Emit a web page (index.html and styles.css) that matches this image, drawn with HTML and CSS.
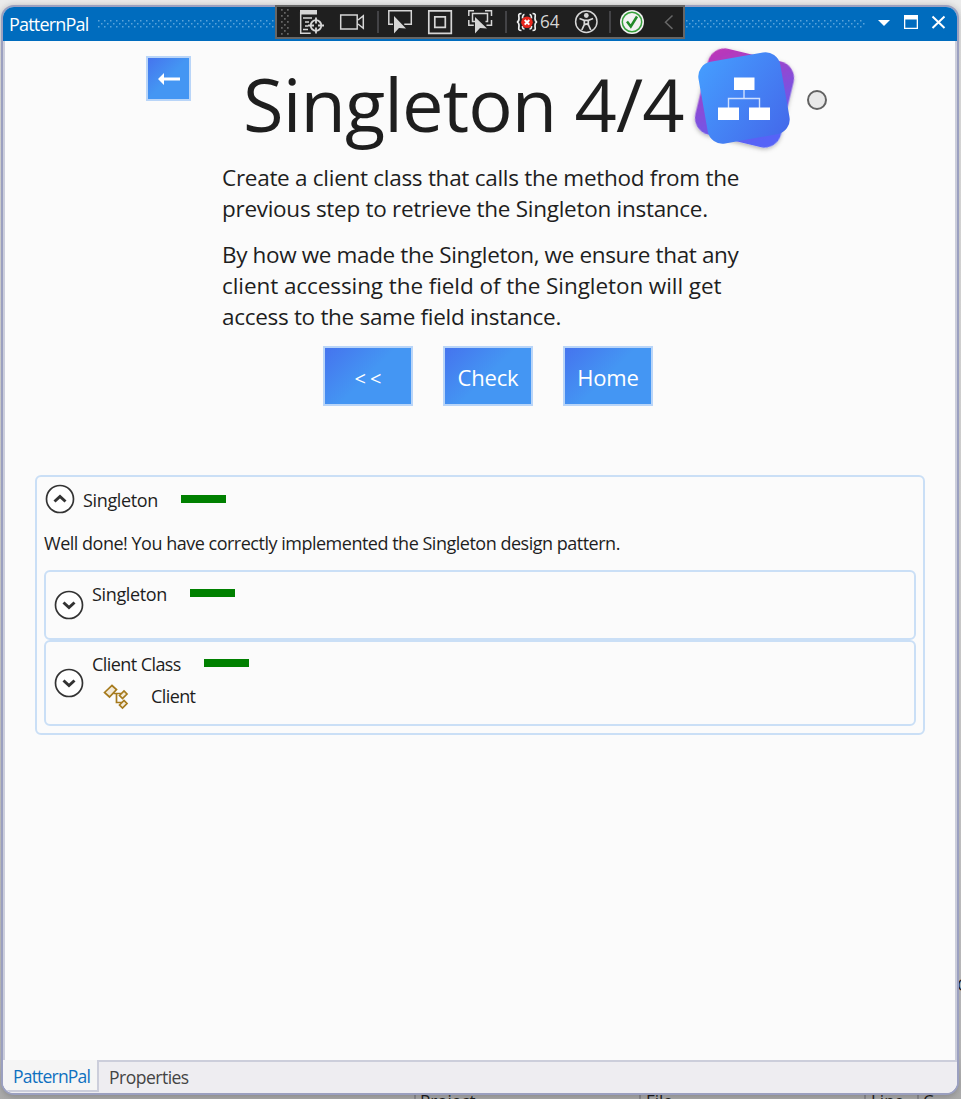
FILE: index.html
```html
<!DOCTYPE html>
<html lang="en">
<head>
<meta charset="utf-8">
<title>PatternPal</title>
<link rel="stylesheet" href="styles.css">
</head>
<body>
<div class="backdrop">
  <span class="bg-label bg-project">Project</span>
  <span class="bg-label bg-file">File</span>
  <span class="bg-label bg-line">Line</span>
  <span class="bg-label bg-code">C</span>
  <span class="bg-label bg-side">O</span>
  <span class="bg-rule r1"></span><span class="bg-rule r2"></span><span class="bg-rule r3"></span><span class="bg-rule r4"></span>
</div>
<main class="window">
  <header class="titlebar">
    <span class="caption">PatternPal</span>
    <svg class="grip" width="768" height="9"><defs><pattern id="dots" width="6" height="8" patternUnits="userSpaceOnUse"><path d="M0 0h1.500v1.500H0zM3 3h1.500v1.500H3zM0 6h1.500v1.500H0z" fill="#5ba3da"/></pattern></defs><rect width="768" height="8" fill="url(#dots)"/></svg>
    <svg class="controls" width="72" height="20" viewBox="0 0 72 20"><path d="M3 7h12l-6 6z" fill="#fff"/><path d="M29 2h14v14H29zM30.300 6.400v8.300h11.400V6.400z" fill="#fff" fill-rule="evenodd"/><path d="M57.500 3.500l12 11.500M69.500 3.500L57.500 15" stroke="#fff" stroke-width="2"/></svg>
  </header>
  <section class="content">
    <div class="hero">
      <button class="btn back"><svg width="24" height="14" viewBox="0 0 24 14"><path d="M1 7l6-6v4.500h16v3H7V13z" fill="#fff"/></svg></button>
      <h1 class="title">Singleton 4/4</h1>
      <svg class="logo" width="112" height="112" viewBox="0 0 112 112">
        <defs>
          <linearGradient id="purple" x1="0" y1="0" x2=".7" y2="1"><stop offset="0" stop-color="#c233b4"/><stop offset="1" stop-color="#5663f7"/></linearGradient>
          <linearGradient id="blue" x1="0" y1="0" x2="1" y2="1"><stop offset="0" stop-color="#459eff"/><stop offset="1" stop-color="#4468ea"/></linearGradient>
          <filter id="soft" x="-20%" y="-20%" width="140%" height="140%"><feDropShadow dx="0" dy="1.500" stdDeviation="2" flood-opacity=".3"/></filter>
        </defs>
        <rect x="12.500" y="11" width="88" height="88" rx="17" fill="url(#purple)" transform="rotate(13.500 56.500 55)" filter="url(#soft)"/>
        <rect x="14.500" y="13.500" width="83" height="83" rx="15" fill="url(#blue)" transform="rotate(-10 56 55)"/>
        <path d="M56 47v9M40.500 65v-9.500h31V65" fill="none" stroke="#cfe0ff" stroke-width="1.400"/>
        <path d="M46 34.500h20.500v12.500H46zM30 64.500h21V77H30zM61 64.500h21V77H61z" fill="#fff"/>
      </svg>
      <span class="status"></span>
    </div>
    <div class="instructions">
      <p><span class="l1">Create a client class that calls the method from the</span><br><span class="l2">previous step to retrieve the Singleton instance.</span></p>
      <p><span class="l3">By how we made the Singleton, we ensure that any</span><br><span class="l4">client accessing the field of the Singleton will get</span><br><span class="l5">access to the same field instance.</span></p>
    </div>
    <div class="actions">
      <button class="btn prev">&lt;&lt;</button>
      <button class="btn">Check</button>
      <button class="btn home">Home</button>
    </div>
    <div class="card results">
      <div class="result-head">
        <svg class="toggle" width="30" height="30" viewBox="0 0 30 30"><circle cx="15" cy="15" r="13.500"/><path d="M9.500 17.500l5.500-5 5.500 5"/></svg>
        <span class="name">Singleton</span><span class="bar"></span>
      </div>
      <p class="message">Well done! You have correctly implemented the Singleton design pattern.</p>
      <div class="card item">
        <svg class="toggle" width="30" height="30" viewBox="0 0 30 30"><circle cx="15" cy="15" r="13.500"/><path d="M9.500 12.500l5.500 5 5.500-5"/></svg>
        <div class="lines"><div class="line"><span class="name">Singleton</span><span class="bar"></span></div></div>
      </div>
      <div class="card item tall">
        <svg class="toggle" width="30" height="30" viewBox="0 0 30 30"><circle cx="15" cy="15" r="13.500"/><path d="M9.500 12.500l5.500 5 5.500-5"/></svg>
        <div class="lines">
          <div class="line"><span class="name wide">Client Class</span><span class="bar"></span></div>
          <div class="line sub">
            <svg width="26" height="26" viewBox="0 0 26 26" fill="#f3ead8" stroke="#a67a1c" stroke-width="1.700"><path d="M1.500 8.500L9 1.500l4.500 4L6.500 13z"/><path d="M10.500 9.500h8M13.500 10v8.500h6" fill="none"/><path d="M16.500 11.500l4.500-4.500 3 3-4.500 4.500zM16.500 21l4.500-4.500 3 3-4.500 4.500z"/></svg>
            <span class="client">Client</span>
          </div>
        </div>
      </div>
    </div>
  </section>
  <footer class="tabs"><span class="tab active">PatternPal</span><span class="tab">Properties</span></footer>
</main>
<div class="debugbar">
  <svg width="406" height="30" viewBox="277 7 406 30" fill="none" stroke="#d6d6d6" stroke-width="1.500">
    <defs><pattern id="grip2" x="281" y="9" width="6" height="6" patternUnits="userSpaceOnUse"><path d="M0 0h1.700v1.700H0zM3 3h1.700v1.700H3z" fill="#666" stroke="none"/></pattern></defs>
    <rect x="281" y="9" width="8" height="26" fill="url(#grip2)" stroke="none"/>
    <path d="M300.700 12v21.200h10M303 18h9M305 22h4M305 26h3M303 29.500h5"/><path d="M300 10h17v4.500h-17z" fill="#d6d6d6" stroke="none"/>
    <circle cx="316" cy="25.500" r="5.300" stroke-width="1.800"/><path d="M316 17.500v6M316 27.500v6M308 25.500h6M318 25.500h6" stroke-width="1.800"/>
    <path d="M340.700 15h16.500v14h-16.500zM358 20l5.300-4.200v12.500L358 24"/>
    <path d="M378 11v22M506 11v22M610 11v22" stroke="#434346" stroke-width="2"/>
    <path d="M393 24.300h-4.200V10.800h22.500v13.500h-7"/><path d="M394 16l12 12.500-7-.5-5 5.500z" fill="#d6d6d6" stroke="none"/>
    <path d="M428.800 10.800h22.500v22.500h-22.500zM434.800 16.800h10.500v10.500h-10.500z" stroke-width="1.700"/>
    <path d="M474 10.800h-5.200V16M468.800 20v5.200h5M485 10.800h6.500V16M491.500 20v5.200h-5M475 21.500h-2.500v-8h15v8h-2"/><path d="M475 17l12 11.500-7-.5-5 5.500z" fill="#d6d6d6" stroke="none"/>
    <path d="M521.500 13.500c-4 0-2.500 2-2.500 5s-2 3.500-2 3.500 2 .5 2 3.500-1.500 5 2.500 5M532.500 13.500c4 0 2.500 2 2.500 5s2 3.500 2 3.500-2 .5-2 3.500 1.500 5-2.500 5M524.500 14.500c-2 0-2 2-2 4M529.500 14.500c2 0 2 2 2 4M522.500 26c0 2 0 3 2 3M531.500 26c0 2 0 3-2 3" stroke="#eee" stroke-width="1.700"/>
    <circle cx="527" cy="22.300" r="5.800" fill="#e8261c" stroke="none"/><path d="M524.700 20l4.600 4.600M529.300 20l-4.600 4.600" stroke="#fff" stroke-width="2"/>
    <text class="count" x="540" y="28.300" textLength="19.500" lengthAdjust="spacingAndGlyphs">64</text>
    <circle cx="586.300" cy="21.700" r="10.700"/><circle cx="586.300" cy="15.500" r="2.400" fill="#d6d6d6" stroke="none"/><path d="M579.500 18.500l4.800 1.800h4l4.800-1.800M584.300 20.500v4l-2.500 5.500M588.300 20.500v4l2.500 5.500M584 25l2.300-1 2.300 1" stroke-width="1.700"/>
    <circle cx="632" cy="22" r="12" fill="#f2f2f2" stroke="none"/><circle cx="632" cy="22" r="9.700" stroke="#37a13c"/><path d="M627 21.500l3.800 5L637 16.500" stroke="#218a28" stroke-width="2.500"/>
    <path d="M672.500 15.500l-7 6.700 7 6.700" stroke="#666"/>
  </svg>
</div>
</body>
</html>
```

FILE: styles.css
```css
* { box-sizing: border-box; }
body { margin: 0; width: 961px; height: 1099px; overflow: hidden; padding: 5px 2px 0 1px; font-family: "Open Sans", "Noto Sans", sans-serif; color: #1e1e1e; background: linear-gradient(#ebebeb, #dedede 50%, #c4c4c6 96%, #aaa 100%); position: relative; }
.backdrop { position: absolute; inset: 0; }
.bg-label { position: absolute; top: 1091px; font-size: 17px; line-height: 20px; }
.bg-project { left: 420px; } .bg-file { left: 646px; } .bg-line { left: 871px; } .bg-code { left: 923px; }
.bg-side { left: 957px; top: 975px; }
.bg-rule { position: absolute; top: 1094px; width: 2px; height: 5px; background: #8c8c90; }
.r1 { left: 414px; } .r2 { left: 639px; } .r3 { left: 864px; } .r4 { left: 917px; }

.window { position: relative; height: 1090px; border: 2px solid #9ba0c0; border-radius: 13px; overflow: hidden; background: #fbfbfb; display: flex; flex-direction: column; box-shadow: 0 1px 7px rgba(0,0,0,.25); }
.titlebar { height: 34px; flex: none; background: #006cbe; display: flex; align-items: center; color: #fff; padding-left: 6px; }
.caption { width: 89px; font-size: 17.500px; line-height: 34px; letter-spacing: -.8px; white-space: nowrap; font-size: 18px; }
.grip { margin-top: 1px; flex: none; }
.controls { margin-left: 9px; margin-top: -3px; flex: none; }

.content { flex: 1; border: solid #cccedb; border-width: 0 2px; padding: 8px 30px 0; }
.hero { display: flex; height: 112px; margin-left: 111px; align-items: flex-start; }
.btn { display: flex; align-items: center; justify-content: center; width: 90px; height: 60px; padding: 2px 0 0; border: 2px solid #b9d5f8; border-radius: 0; background: linear-gradient(135deg, #4574ee, #4496f3 50%, #4496f3); color: #fff; font: 22px/30px "Open Sans", sans-serif; letter-spacing: -.15px; }
.back { width: 45px; height: 45px; margin-top: 7px; padding: 0; flex: none; }
.title { margin: 5px 0 0 52px; width: 449px; height: 100px; font-size: 74px; font-weight: 400; line-height: 100px; letter-spacing: -.9px; white-space: nowrap; flex: none; }
.logo { margin: -6px 0 0 -4px; flex: none; }
.status { width: 20px; height: 20px; border: 2px solid #626262; border-radius: 50%; background: #e8e8e8; margin: 41px 0 0 7px; flex: none; }
.instructions { margin-left: 187px; padding-top: 1px; height: 186px; font-size: 22.500px; line-height: 31px; white-space: nowrap; }
.instructions p { margin: 0 0 15px; }
.l1, .l2 { letter-spacing: -.28px; }
.l3 { letter-spacing: -.36px; }
.l4 { letter-spacing: -.08px; }
.l5 { letter-spacing: -.3px; }
.actions { display: flex; gap: 30px; margin: -1px 0 69px 288px; }
.prev { letter-spacing: 4px; font-size: 20px; padding: 6px 0 0 4px; }

.card { border: 2px solid #cadff6; border-radius: 6px; }
.results { height: 260px; padding: 6px 7px; font-size: 18px; line-height: 26px; }
.result-head { display: flex; height: 34px; }
.toggle { flex: none; fill: #fff; stroke: #333; stroke-width: 1.700; }
.toggle path { fill: none; stroke-width: 3; }
.result-head .toggle { margin: 1px -1px 0 1px; }
.result-head .name { margin: 4px 0 0 9px; }
.name { width: 98px; white-space: nowrap; letter-spacing: -.35px; }
.name.wide { width: 112px; letter-spacing: -.57px; }
.bar { width: 45px; height: 8px; background: #008000; margin-top: 12px; }
.message { margin: 13px 0 14px; white-space: nowrap; letter-spacing: -.49px; }
.item { height: 70px; display: flex; align-items: center; padding-left: 8px; }
.item.tall { height: 86px; }
.lines { align-self: flex-start; margin-left: 8px; padding-top: 9px; }
.line { display: flex; height: 32px; }
.line .bar { margin-top: 8px; }
.sub svg { margin-left: 11px; margin-top: 1px; }
.client { margin-left: 22px; letter-spacing: -.6px; }

.tabs { height: 33px; flex: none; display: flex; background: #eeedf1; border-top: 2px solid #cccedb; font-size: 17.500px; line-height: 31px; color: #444; letter-spacing: -.5px; }
.tab { padding: 0 10px; white-space: nowrap; }
.tab.active { width: 96px; margin-top: -2px; height: 32px; line-height: 32px; background: #f5f5f5; color: #0e70c0; border: solid #cccedb; border-width: 0 2px 2px 0; letter-spacing: -.8px; }

.debugbar { position: absolute; left: 275px; top: 5px; width: 410px; height: 34px; border: 2px solid #666; background: #1f1f1f; }
.debugbar svg { display: block; }
.count { font: 18px "Open Sans", sans-serif; fill: #d6d6d6; stroke: none; }
```
